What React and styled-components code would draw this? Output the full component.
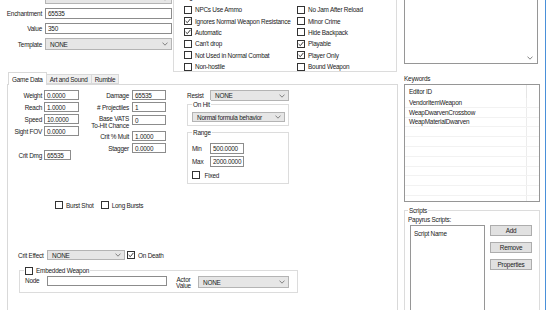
import React from 'react';
import styled, { createGlobalStyle } from 'styled-components';

const GlobalStyle = createGlobalStyle`
  html, body { margin: 0; padding: 0; background: #fff; }
  body {
    font-family: "Liberation Sans", Arial, sans-serif;
    font-size: 6.4px;
    letter-spacing: -0.22px;
    color: #1a1a1a;
  }
  * { box-sizing: border-box; }
`;

const Window = styled.div`
  width: 546px;
  height: 310px;
  overflow: hidden;
  display: flex;
  gap: 6px;
  padding-right: 5px;
  border-right: 1px solid #4a90d9;
  background: #fff;
`;

const LeftCol = styled.div`
  width: 398px;
  flex-shrink: 0;
  margin-top: -8px;
  display: flex;
  flex-direction: column;
`;

const RightCol = styled.div`
  width: 136px;
  flex-shrink: 0;
  margin-top: -8px;
  display: flex;
  flex-direction: column;
`;

const TopArea = styled.div`
  height: 80px;
  display: flex;
  flex-shrink: 0;
`;

const FieldCol = styled.div`
  width: 173px;
  padding-top: 1px;
  display: flex;
  flex-direction: column;
  gap: 4px;
`;

const FieldRow = styled.div`
  display: flex;
  align-items: center;
`;

const FieldLabel = styled.span`
  width: ${(p) => p.$w || 42}px;
  margin-right: ${(p) => p.$mr ?? 3}px;
  text-align: ${(p) => p.$align || 'right'};
  white-space: nowrap;
  flex-shrink: 0;
  line-height: ${(p) => p.$lh || 'normal'};
`;

const TextBox = styled.div`
  width: ${(p) => p.$w}px;
  height: ${(p) => p.$h || 11}px;
  border: 1px solid #8c8c8c;
  background: #fff;
  padding-left: 2px;
  display: flex;
  align-items: center;
  flex-shrink: 0;
  white-space: nowrap;
  overflow: hidden;
`;

const ComboBox = styled.div`
  width: ${(p) => p.$w}px;
  height: ${(p) => p.$h || 11}px;
  border: 1px solid #b4b4b4;
  background: #e6e6e6;
  padding: 0 3px 0 4px;
  display: flex;
  align-items: center;
  justify-content: space-between;
  flex-shrink: 0;
  white-space: nowrap;
`;

const Chevron = () => (
  <svg width="6" height="4" viewBox="0 0 6 4">
    <path d="M0.5 0.6 L3 3.2 L5.5 0.6" stroke="#777" strokeWidth="0.9" fill="none" />
  </svg>
);

const Combo = ({ w, h, value, ...rest }) => (
  <ComboBox $w={w} $h={h} {...rest}>
    <span>{value}</span>
    <Chevron />
  </ComboBox>
);

const GroupBox = styled.div`
  position: relative;
  width: ${(p) => p.$w}px;
  height: ${(p) => (p.$h ? `${p.$h}px` : 'auto')};
  margin: ${(p) => p.$m || '0'};
  padding: ${(p) => p.$pad || '0'};
  border: 1px solid #dcdcdc;
  flex-shrink: 0;
`;

const Caption = styled.span`
  position: absolute;
  top: -5px;
  left: ${(p) => p.$left || 5}px;
  background: #fff;
  padding: 0 1px;
  line-height: 9px;
  display: flex;
  align-items: center;
  gap: 2px;
`;

const CheckLabel = styled.label`
  display: flex;
  align-items: center;
  gap: 3px;
  white-space: nowrap;
`;

const Box = styled.span`
  width: 8px;
  height: 8px;
  border: 1px solid #333;
  background: #fff;
  display: flex;
  align-items: center;
  justify-content: center;
  flex-shrink: 0;
`;

const Check = ({ checked, children }) => (
  <CheckLabel>
    <Box>
      {checked && (
        <svg width="6" height="6" viewBox="0 0 6 6">
          <path d="M0.6 3 L2.3 4.7 L5.4 0.9" stroke="#222" strokeWidth="0.9" fill="none" />
        </svg>
      )}
    </Box>
    {children}
  </CheckLabel>
);

const FlagGrid = styled.div`
  display: grid;
  grid-template-columns: 113px 1fr;
  grid-auto-flow: column;
  grid-template-rows: repeat(6, 11.4px);
  padding: 7px 0 0 10px;
  align-items: center;
`;

const TabArea = styled.div`
  margin-left: 7px;
  width: 391px;
  display: flex;
  flex-direction: column;
  flex: 1;
`;

const TabStrip = styled.div`
  height: 12px;
  display: flex;
  align-items: flex-end;
  padding-left: 1px;
  flex-shrink: 0;
`;

const Tab = styled.div`
  position: relative;
  height: ${(p) => (p.$active ? 13 : 10)}px;
  margin-bottom: ${(p) => (p.$active ? -1 : 0)}px;
  margin-left: ${(p) => (p.$active ? 0 : -1)}px;
  padding: 0 3px;
  border: 1px solid #d9d9d9;
  border-bottom: ${(p) => (p.$active ? 'none' : '1px solid #d9d9d9')};
  background: ${(p) => (p.$active ? '#fff' : '#f0f0f0')};
  z-index: ${(p) => (p.$active ? 1 : 0)};
  display: flex;
  align-items: center;
  white-space: nowrap;
  &:first-child { margin-left: 0; }
`;

const Panel = styled.div`
  flex: 1;
  min-height: 240px;
  border: 1px solid #d9d9d9;
  background: #fff;
  padding-top: 5px;
  display: flex;
  flex-direction: column;
`;

const TopFields = styled.div`
  display: flex;
  align-items: flex-start;
`;

const FormGrid = styled.div`
  display: grid;
  grid-template-columns: ${(p) => p.$label}px ${(p) => p.$input}px;
  grid-template-rows: ${(p) => p.$rows};
  column-gap: ${(p) => p.$cg || 2}px;
  row-gap: 2px;
  margin: ${(p) => p.$m || '0'};
  align-items: center;
`;

const GridLabel = styled.span`
  text-align: right;
  white-space: nowrap;
  line-height: ${(p) => p.$lh || 'normal'};
`;

const GridBox = styled(TextBox)`
  width: auto;
  height: 10px;
  align-self: ${(p) => p.$self || 'center'};
  margin-top: ${(p) => p.$mt || 0}px;
`;

const ColA = styled.div`
  display: flex;
  flex-direction: column;
`;

const ColC = styled.div`
  margin-left: 21px;
  width: 102px;
  display: flex;
  flex-direction: column;
`;

const RangeRow = styled.div`
  display: flex;
  align-items: center;
  margin-top: ${(p) => p.$mt || 0}px;
`;

const BurstRow = styled.div`
  display: flex;
  align-items: center;
  gap: 7px;
  margin-top: 17px;
  padding-left: 47px;
`;

const CritRow = styled.div`
  display: flex;
  align-items: center;
  gap: 2px;
  margin-top: 41px;
  padding-left: 10px;
`;

const EmbedBody = styled.div`
  display: flex;
  align-items: flex-start;
  padding: 5px 0 0 5px;
`;

const ActorLabel = styled.span`
  width: 17px;
  margin: 1px 6px 0 8px;
  text-align: center;
  line-height: 6px;
  flex-shrink: 0;
`;

const KwLabel = styled.div`
  margin-top: 10px;
  line-height: 9px;
`;

const ListBox = styled.div`
  border: 1px solid #969696;
  background: #fff;
  height: ${(p) => p.$h}px;
  margin-top: ${(p) => p.$mt || 0}px;
  flex-shrink: 0;
  overflow: hidden;
  display: flex;
  flex-direction: column;
`;

const TopList = styled(ListBox)`
  width: 134px;
  justify-content: flex-end;
  align-items: flex-end;
  padding: 0 4px 3px 0;
`;

const ListHead = styled.div`
  height: 13px;
  display: flex;
  flex-shrink: 0;
`;

const HeadCell = styled.div`
  width: ${(p) => p.$w}px;
  border-right: 1px solid #e5e5e5;
  padding-left: 4px;
  display: flex;
  align-items: center;
`;

const ListRow = styled.div`
  height: 9.8px;
  display: flex;
  flex-shrink: 0;
  border-bottom: 1px solid #f2f2f2;
`;

const RowCell = styled.div`
  width: 122px;
  border-right: 1px solid #ececec;
  padding-left: 4px;
  display: flex;
  align-items: center;
  white-space: nowrap;
`;

const ScriptsBox = styled.div`
  position: relative;
  margin-top: 8px;
  flex: 1;
  min-height: 110px;
  border: 1px solid #dcdcdc;
  padding: 5px 0 0 3px;
`;

const ScriptsBody = styled.div`
  display: flex;
  align-items: flex-start;
  margin-top: 2px;
`;

const ScriptList = styled.div`
  margin-left: 2px;
  width: 75px;
  height: 100px;
  border: 1px solid #969696;
  padding: 4px 0 0 3px;
`;

const ButtonCol = styled.div`
  margin-left: 5px;
  width: 42px;
  display: flex;
  flex-direction: column;
  gap: 6px;
`;

const Button = styled.div`
  height: 11px;
  border: 1px solid #adadad;
  background: #e1e1e1;
  display: flex;
  align-items: center;
  justify-content: center;
`;

const flagsLeft = [
  ['NPCs Use Ammo', false],
  ['Ignores Normal Weapon Resistance', true],
  ['Automatic', true],
  ["Can't drop", false],
  ['Not Used in Normal Combat', false],
  ['Non-hostile', false],
];
const flagsRight = [
  ['No Jam After Reload', false],
  ['Minor Crime', false],
  ['Hide Backpack', false],
  ['Playable', true],
  ['Player Only', true],
  ['Bound Weapon', false],
];

const keywords = ['VendorItemWeapon', 'WeapDwarvenCrossbow', 'WeapMaterialDwarven'];

export default function App() {
  const kwRows = [...keywords, ...Array(8).fill('')];
  return (
    <>
      <GlobalStyle />
      <Window>
        <LeftCol>
          <TopArea>
            <FieldCol>
              <FieldRow>
                <FieldLabel />
                <Combo w={127} value="" />
              </FieldRow>
              <FieldRow>
                <FieldLabel>Enchantment</FieldLabel>
                <TextBox $w={127}>65535</TextBox>
              </FieldRow>
              <FieldRow>
                <FieldLabel>Value</FieldLabel>
                <TextBox $w={127}>350</TextBox>
              </FieldRow>
              <FieldRow>
                <FieldLabel>Template</FieldLabel>
                <Combo w={127} h={12} value="NONE" />
              </FieldRow>
            </FieldCol>
            <GroupBox $w={224} $h={76} $m="4px 0 0 0">
              <Caption $left={6}>Flags</Caption>
              <FlagGrid>
                {[...flagsLeft, ...flagsRight].map(([t, c]) => (
                  <Check key={t} checked={c}>{t}</Check>
                ))}
              </FlagGrid>
            </GroupBox>
          </TopArea>

          <TabArea>
            <TabStrip>
              <Tab $active>Game Data</Tab>
              <Tab>Art and Sound</Tab>
              <Tab>Rumble</Tab>
            </TabStrip>
            <Panel>
              <TopFields>
                <ColA>
                  <FormGrid $label={34} $input={35} $rows="repeat(4, 10px)">
                    <GridLabel>Weight</GridLabel><GridBox>0.0000</GridBox>
                    <GridLabel>Reach</GridLabel><GridBox>1.0000</GridBox>
                    <GridLabel>Speed</GridLabel><GridBox>10.0000</GridBox>
                    <GridLabel>Sight FOV</GridLabel><GridBox>0.0000</GridBox>
                  </FormGrid>
                  <FormGrid $label={34} $input={27} $rows="10px" $m="14px 0 0 0">
                    <GridLabel>Crit Dmg</GridLabel><GridBox>65535</GridBox>
                  </FormGrid>
                </ColA>
                <FormGrid
                  $label={47}
                  $input={34}
                  $cg={3}
                  $rows="10px 10px 15px 10px 10px"
                  $m="0 0 0 3px"
                >
                  <GridLabel>Damage</GridLabel><GridBox>65535</GridBox>
                  <GridLabel># Projectiles</GridLabel><GridBox>1</GridBox>
                  <GridLabel $lh="7px">Base VATS<br />To-Hit Chance</GridLabel>
                  <GridBox $self="start" $mt={1}>0</GridBox>
                  <GridLabel>Crit % Mult</GridLabel><GridBox>1.0000</GridBox>
                  <GridLabel>Stagger</GridLabel><GridBox>0.0000</GridBox>
                </FormGrid>
                <ColC>
                  <FieldRow>
                    <FieldLabel $w={23} $mr={0} $align="left">Resist</FieldLabel>
                    <Combo w={79} value="NONE" />
                  </FieldRow>
                  <GroupBox $w={102} $h={22} $m="3px 0 0 0" $pad="7px 0 0 4px">
                    <Caption $left={4}>On Hit</Caption>
                    <Combo w={93} h={10} value="Normal formula behavior" />
                  </GroupBox>
                  <GroupBox $w={102} $h={52} $m="6px 0 0 0" $pad="10px 0 0 4px">
                    <Caption $left={4}>Range</Caption>
                    <RangeRow>
                      <FieldLabel $w={18} $mr={0} $align="left">Min</FieldLabel>
                      <TextBox $w={34}>500.0000</TextBox>
                    </RangeRow>
                    <RangeRow $mt={2}>
                      <FieldLabel $w={18} $mr={0} $align="left">Max</FieldLabel>
                      <TextBox $w={34}>2000.0000</TextBox>
                    </RangeRow>
                    <RangeRow $mt={4}>
                      <Check>&nbsp;Fixed</Check>
                    </RangeRow>
                  </GroupBox>
                </ColC>
              </TopFields>

              <BurstRow>
                <Check>Burst Shot</Check>
                <Check>Long Bursts</Check>
              </BurstRow>

              <CritRow>
                <FieldLabel $w={27} $mr={0} $align="left">Crit Effect</FieldLabel>
                <Combo w={78} h={10} value="NONE" />
                <Check checked>On Death</Check>
              </CritRow>

              <GroupBox $w={279} $h={23} $m="10px 0 0 11px">
                <Caption $left={4}>
                  <Check>Embedded Weapon</Check>
                </Caption>
                <EmbedBody>
                  <FieldLabel $w={22} $mr={0} $align="left" $lh="10px">Node</FieldLabel>
                  <TextBox $w={120} $h={10} />
                  <ActorLabel>Actor<br />Value</ActorLabel>
                  <Combo w={91} h={12} value="NONE" />
                </EmbedBody>
              </GroupBox>
            </Panel>
          </TabArea>
        </LeftCol>

        <RightCol>
          <TopList $h={67} $mt={5}>
            <Chevron />
          </TopList>
          <KwLabel>Keywords</KwLabel>
          <ListBox $h={118} $mt={1}>
            <ListHead>
              <HeadCell $w={122}>Editor ID</HeadCell>
            </ListHead>
            {kwRows.map((k, i) => (
              <ListRow key={i}>
                <RowCell>{k}</RowCell>
              </ListRow>
            ))}
          </ListBox>
          <ScriptsBox>
            <Caption $left={3}>Scripts</Caption>
            <div>Papyrus Scripts:</div>
            <ScriptsBody>
              <ScriptList>Script Name</ScriptList>
              <ButtonCol>
                <Button>Add</Button>
                <Button>Remove</Button>
                <Button>Properties</Button>
              </ButtonCol>
            </ScriptsBody>
          </ScriptsBox>
        </RightCol>
      </Window>
    </>
  );
}
